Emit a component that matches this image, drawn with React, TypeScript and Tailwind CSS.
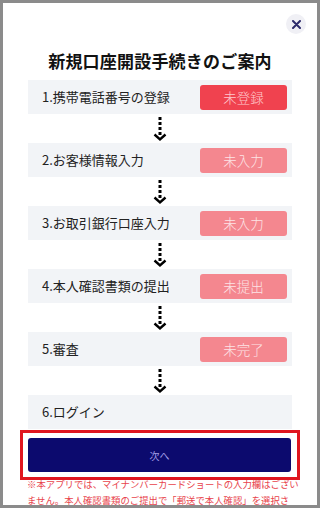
import React from "react";

type Step = {
  label: string;
  status?: string;
  active?: boolean;
};

const STEPS: Step[] = [
  { label: "1.携帯電話番号の登録", status: "未登録", active: true },
  { label: "2.お客様情報入力", status: "未入力" },
  { label: "3.お取引銀行口座入力", status: "未入力" },
  { label: "4.本人確認書類の提出", status: "未提出" },
  { label: "5.審査", status: "未完了" },
  { label: "6.ログイン" },
];

const FONT = { fontFamily: '"Noto Sans CJK JP", "Noto Sans", sans-serif' };

function DottedArrow() {
  return (
    <div className="h-[29px] flex justify-center">
      <svg width="14" height="29" viewBox="0 0 14 29" className="text-black">
        <rect x="5.5" y="3" width="3" height="3" fill="currentColor" />
        <rect x="5.5" y="8" width="3" height="3" fill="currentColor" />
        <rect x="5.5" y="13" width="3" height="3" fill="currentColor" />
        <rect x="5.5" y="18" width="3" height="3" fill="currentColor" />
        <path d="M1.5 20.5 L7 25.5 L12.5 20.5" fill="none" stroke="currentColor" strokeWidth="2.4" />
      </svg>
    </div>
  );
}

export default function App() {
  return (
    <div
      className="relative w-[320px] h-[508px] border-[3px] border-[#8b8b8b] bg-white overflow-hidden"
      style={FONT}
    >
      {/* Close button */}
      <button className="absolute top-[11px] right-[11px] w-[20px] h-[20px] rounded-full bg-[#f0f0f5] flex items-center justify-center">
        <svg width="9" height="9" viewBox="0 0 9 9">
          <path d="M1 1 L8 8 M8 1 L1 8" stroke="#2d2b6b" strokeWidth="2" strokeLinecap="round" />
        </svg>
      </button>

      <div className="px-[25px] pt-[46px] flex flex-col">
        <h1 className="text-center text-[17px] leading-[24px] font-bold text-[#111] tracking-[0.2px]">
          新規口座開設手続きのご案内
        </h1>

        <div className="mt-[7px] flex flex-col">
          {STEPS.map((step, i) => (
            <React.Fragment key={step.label}>
              <div className="h-[34px] bg-[#f2f4f7] flex items-center justify-between pl-[14px] pr-[5px]">
                <span className="text-[13px] text-[#222]">{step.label}</span>
                {step.status && (
                  <span
                    className={`w-[87px] h-[25px] rounded-[3px] flex items-center justify-center text-[13.5px] font-light ${
                      step.active
                        ? "bg-[#f0424f] text-[#ffc9cd]"
                        : "bg-[#f4878f] text-[#fde4e6]"
                    }`}
                  >
                    {step.status}
                  </span>
                )}
              </div>
              {i < STEPS.length - 1 && <DottedArrow />}
            </React.Fragment>
          ))}
        </div>
      </div>

      {/* Footer */}
      <div className="mt-[1px] px-[17px]">
        <div className="border-[3px] border-[#e0161f] pl-[5px] pr-[6px] py-[5px]">
          <button className="w-full h-[34px] rounded-[3px] bg-[#0c0a6e] text-[10px] text-[#a29ee6]">
            次へ
          </button>
        </div>
        <div className="h-[28px] overflow-hidden px-[7px]">
          <div className="mt-[-4px] text-[9.4px] leading-[16px] text-[#e8434c] whitespace-nowrap">
            <div>※本アプリでは、マイナンバーカードショートの入力欄はござい</div>
            <div>ません。本人確認書類のご提出で「郵送で本人確認」を選択さ</div>
          </div>
        </div>
      </div>
    </div>
  );
}
